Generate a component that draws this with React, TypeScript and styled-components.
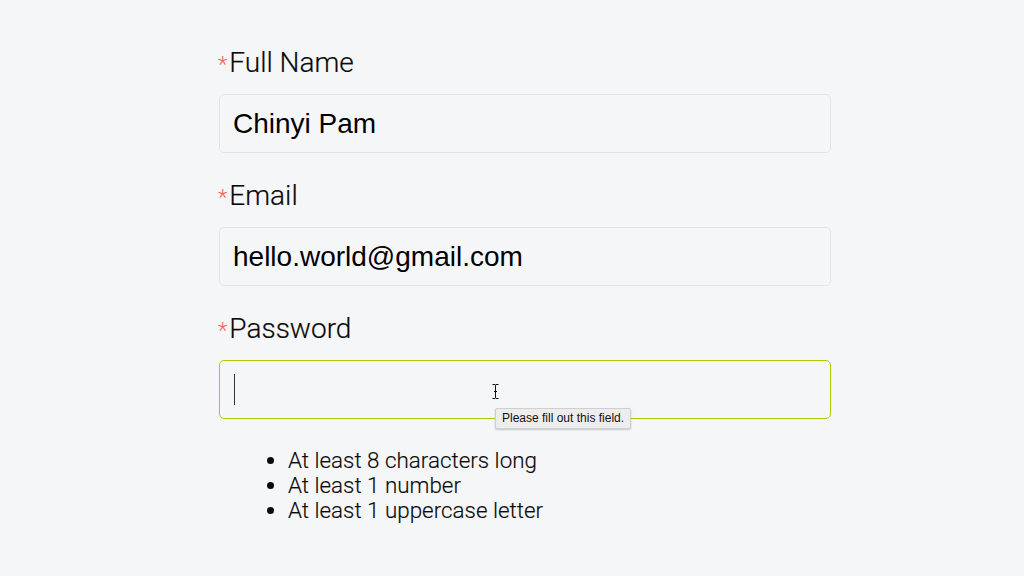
import React from "react";
import styled, { createGlobalStyle } from "styled-components";

const Global = createGlobalStyle`
  html, body { margin: 0; padding: 0; background: #f5f6f8; }
  body { font-family: Roboto, "Noto Sans", sans-serif; }
`;

const Page = styled.div`
  width: 1024px;
  height: 576px;
  background: #f5f6f8;
  display: flex;
  justify-content: flex-start;
  overflow: hidden;
`;

const Form = styled.form`
  margin-left: 219px;
  padding-top: 43px;
  width: 612px;
  display: flex;
  flex-direction: column;
`;

const Group = styled.div`
  display: flex;
  flex-direction: column;
  margin-bottom: 23px;
  &:last-of-type { margin-bottom: 0; }
`;

const Label = styled.label`
  font-family: Roboto, sans-serif;
  font-weight: 300;
  font-size: 28px;
  line-height: 40px;
  height: 40px;
  color: #0a0a0a;
  margin-left: -1px;
  margin-bottom: 11px;
  display: flex;
  align-items: baseline;
  -webkit-text-stroke: 0.2px #0a0a0a;
`;

const Star = styled.span`
  color: #ee6658;
  font-size: 22px;
  margin-right: 2px;
  -webkit-text-stroke: 0;
`;

const FieldWrap = styled.div`
  position: relative;
`;

const Input = styled.input<{ $focused?: boolean }>`
  box-sizing: border-box;
  width: 612px;
  height: 59px;
  padding: 0 13px;
  border: 1px solid ${(p) => (p.$focused ? "#b3c800" : "#e3e4e7")};
  border-radius: 5px;
  background: #f5f6f8;
  font-family: "Liberation Sans", Arial, sans-serif;
  font-size: 28px;
  color: #000;
  outline: none;
`;

const Caret = styled.span`
  position: absolute;
  left: 15px;
  top: 14px;
  width: 1px;
  height: 31px;
  background: #333;
`;

const Cursor = styled.svg`
  position: absolute;
  left: 273px;
  top: 24px;
`;

const Tooltip = styled.div`
  position: absolute;
  left: 276px;
  top: 48px;
  padding: 2px 6px 3px;
  background: #ededed;
  border: 1px solid #cfcfcf;
  border-radius: 2px;
  box-shadow: 0 1px 2px rgba(0, 0, 0, 0.2);
  font-family: "Liberation Sans", Arial, sans-serif;
  font-size: 12px;
  line-height: 14px;
  color: #111;
  white-space: nowrap;
`;

const Rules = styled.ul`
  margin: 29px 0 0 0;
  padding-left: 69px;
  font-family: Roboto, sans-serif;
  font-weight: 300;
  font-size: 22.4px;
  line-height: 25px;
  color: #0a0a0a;
  -webkit-text-stroke: 0.15px #0a0a0a;
`;

export default function App() {
  return (
    <Page>
      <Global />
      <Form onSubmit={(e) => e.preventDefault()}>
        <Group>
          <Label><Star>*</Star>Full Name</Label>
          <FieldWrap>
            <Input defaultValue="Chinyi Pam" />
          </FieldWrap>
        </Group>
        <Group>
          <Label><Star>*</Star>Email</Label>
          <FieldWrap>
            <Input defaultValue="hello.world@gmail.com" />
          </FieldWrap>
        </Group>
        <Group>
          <Label><Star>*</Star>Password</Label>
          <FieldWrap>
            <Input type="password" $focused defaultValue="" />
            <Caret />
            <Cursor width="7" height="15" viewBox="0 0 7 15">
              <path d="M0.5 0.5h2.5l0.5 1l0.5-1h2.5M3.5 1.5v12M0.5 14.5h2.5l0.5-1l0.5 1h2.5M2 7.5h3" stroke="#111" strokeWidth="1" fill="none" />
            </Cursor>
            <Tooltip>Please fill out this field.</Tooltip>
          </FieldWrap>
        </Group>
        <Rules>
          <li>At least 8 characters long</li>
          <li>At least 1 number</li>
          <li>At least 1 uppercase letter</li>
        </Rules>
      </Form>
    </Page>
  );
}
